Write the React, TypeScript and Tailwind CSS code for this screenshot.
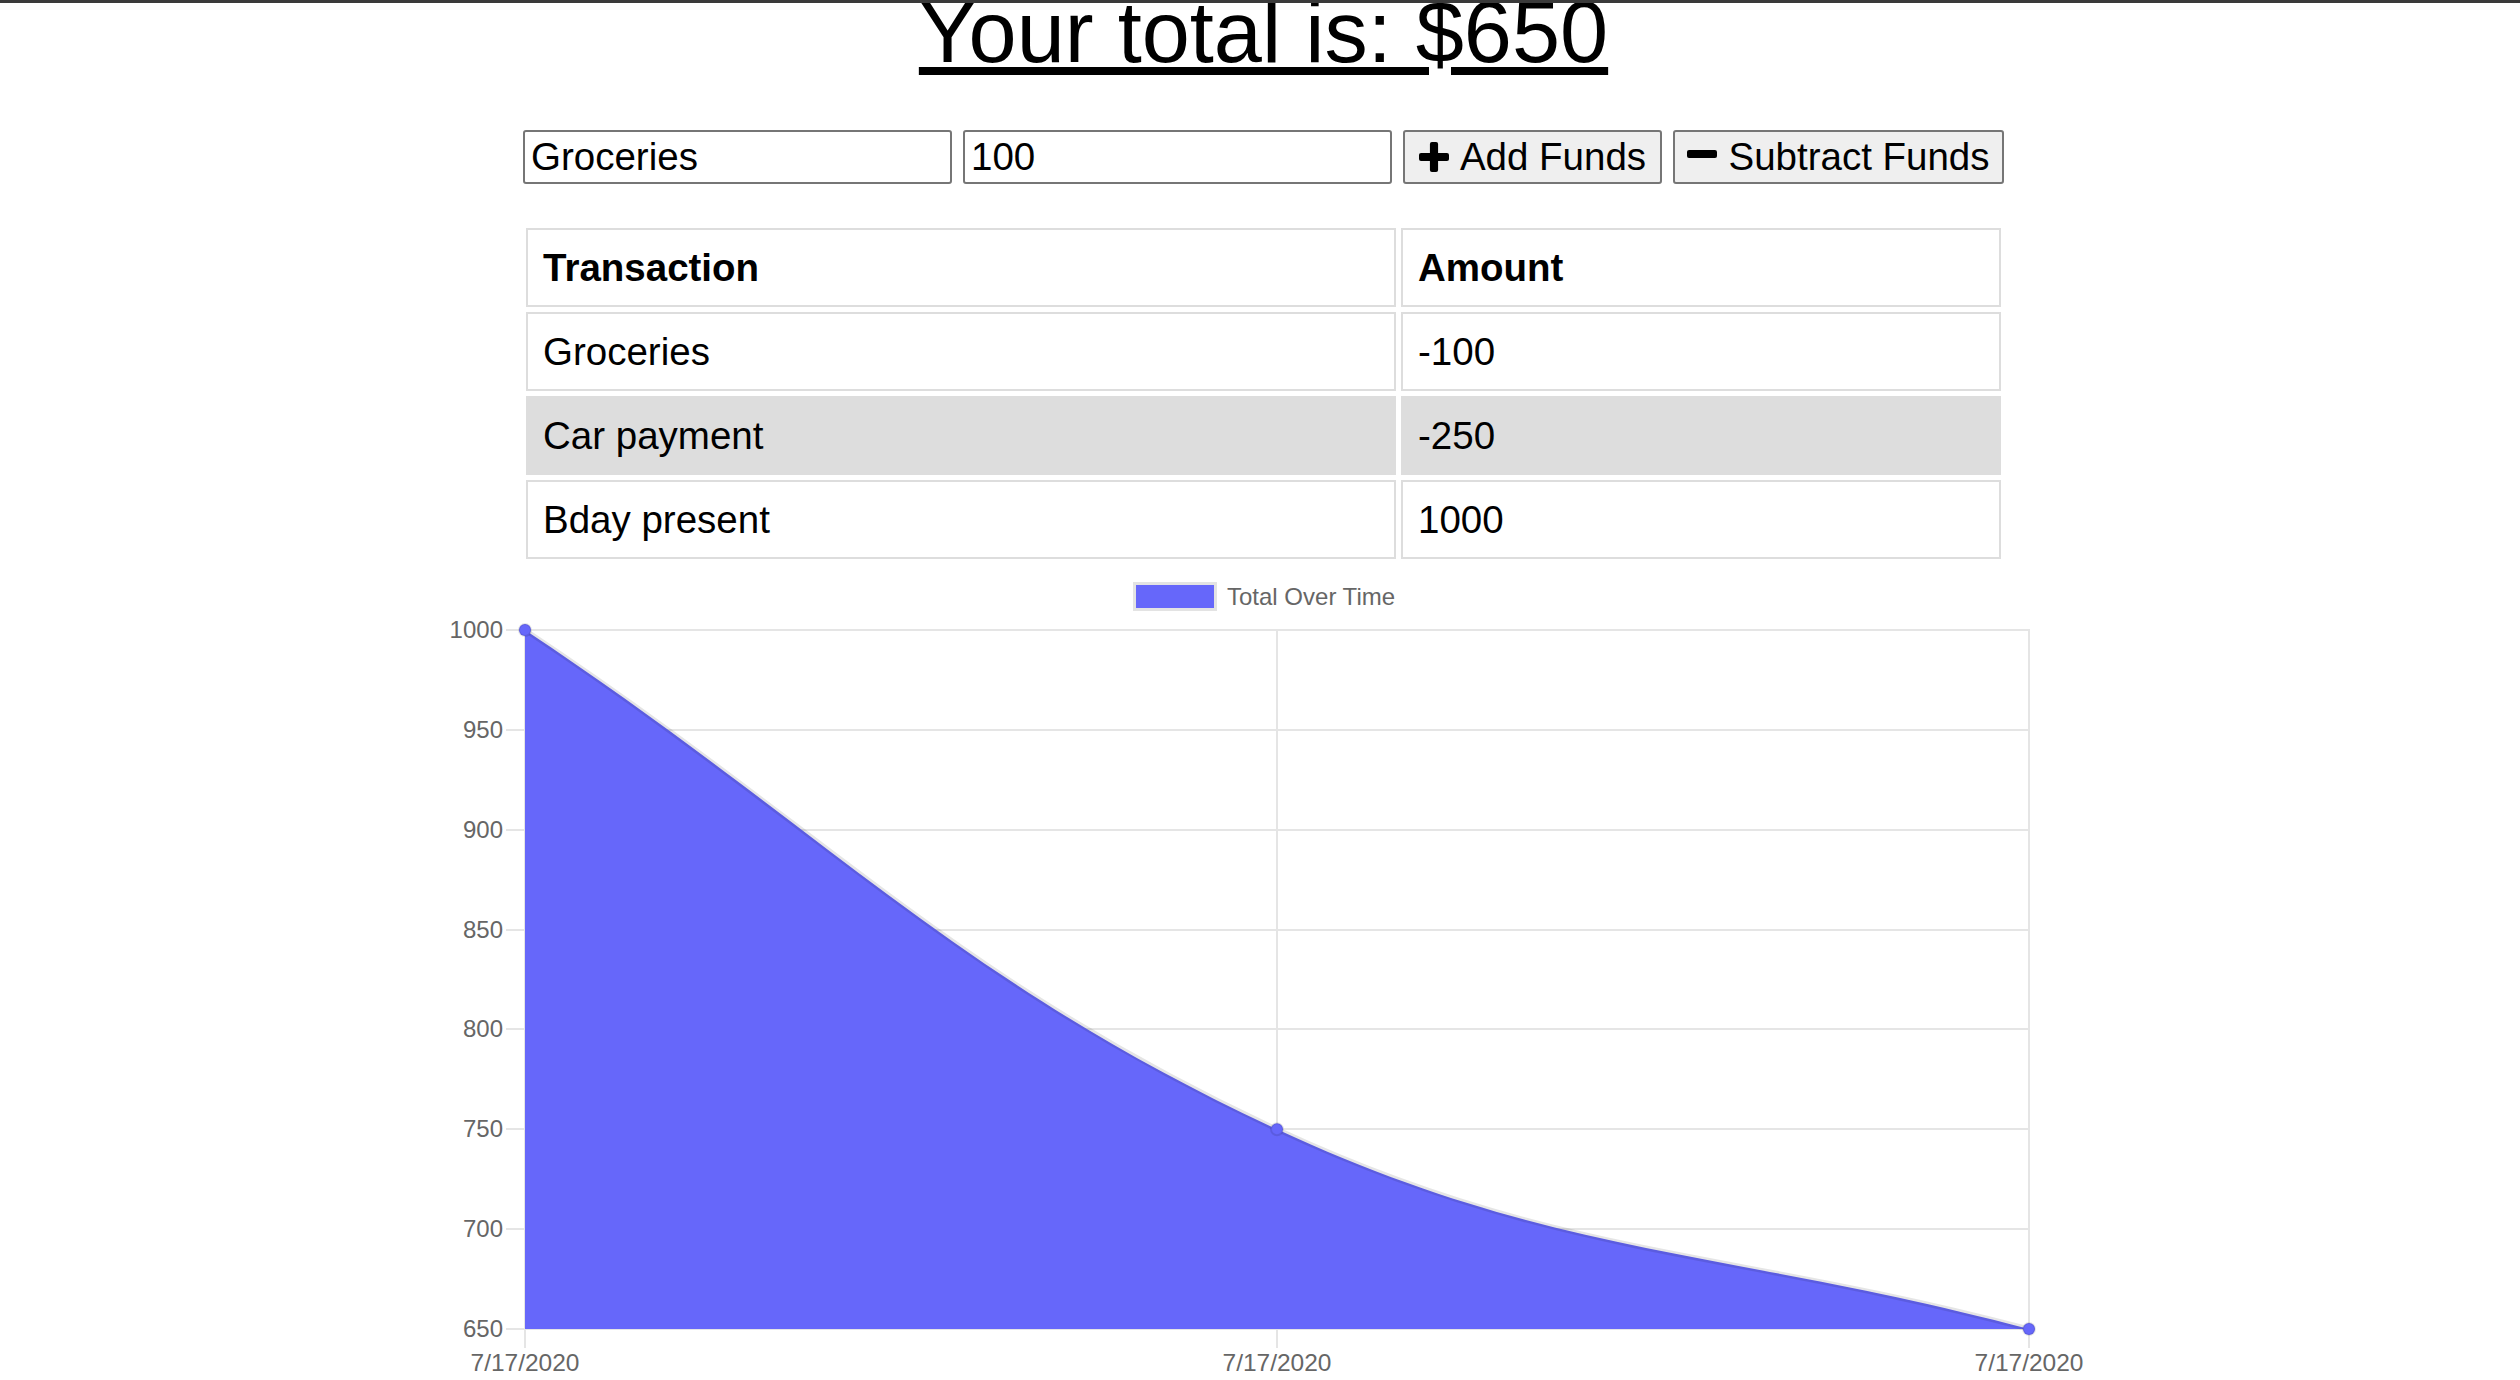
import React from "react";

const yTicks = [1000, 950, 900, 850, 800, 750, 700, 650];
const OFF = 2;
const yPos = (v: number) => Math.round(64 + OFF + ((1000 - v) / 50) * 99.857);
const xPos = [112, 864, 1616];

function PlusIcon() {
  return (
    <svg width="30" height="30" viewBox="0 0 100 100" className="shrink-0">
      <rect x="0" y="36.4" width="100" height="27.2" rx="6.8" fill="#000" />
      <rect x="36.4" y="0" width="27.2" height="100" rx="6.8" fill="#000" />
    </svg>
  );
}

function MinusIcon() {
  return (
    <svg width="30" height="30" viewBox="0 0 100 100" className="shrink-0 -translate-y-[3px]">
      <rect x="0" y="36.4" width="100" height="27.2" rx="6.8" fill="#000" />
    </svg>
  );
}

function Chart() {
  const P0 = [112, 64 + OFF];
  const P1 = [864, 563.3 + OFF];
  const P2 = [1616, 763 + OFF];
  const curve = `M${P0[0]},${P0[1]} C412.8,${263.7 + OFF} 540.9,${413.1 + OFF} ${P1[0]},${P1[1]} C1142.5,${692.7 + OFF} 1315.2,${683.1 + OFF} ${P2[0]},${P2[1]}`;
  const fill = `${curve} L1616,${763 + OFF} L112,${763 + OFF} Z`;
  const f = "Liberation Sans, Arial, sans-serif";
  return (
    <svg width="1701" height="816" className="block shrink-0">
      {/* legend */}
      <rect x="721.5" y="19.5" width="81" height="26" fill="#6667fa" stroke="#e3e3e3" strokeWidth="3" />
      <text x="814" y="40.5" fontFamily={f} fontSize="24" fill="#666">
        Total Over Time
      </text>
      {/* horizontal grid */}
      {yTicks.map((v) => (
        <line key={v} x1="93" x2="1617" y1={yPos(v)} y2={yPos(v)} stroke="#e5e5e5" strokeWidth="2" />
      ))}
      {/* vertical grid */}
      {xPos.map((x) => (
        <line key={x} x1={x} x2={x} y1={65} y2={784} stroke="#e5e5e5" strokeWidth="2" />
      ))}
      {/* fill + line */}
      <path d={fill} fill="#6667fa" />
      <path d={curve} fill="none" stroke="rgba(0,0,0,0.1)" strokeWidth="5" />
      {[P0, P1, P2].map((p, i) => (
        <circle key={i} cx={p[0]} cy={p[1]} r="6" fill="#6667fa" stroke="rgba(0,0,0,0.1)" strokeWidth="2" />
      ))}
      {/* y labels */}
      {yTicks.map((v) => (
        <text key={v} x="90" y={yPos(v) + 8} textAnchor="end" fontFamily={f} fontSize="24" fill="#666">
          {v}
        </text>
      ))}
      {/* x labels */}
      {xPos.map((x) => (
        <text key={x} x={x} y="807" textAnchor="middle" fontFamily={f} fontSize="24.5" fill="#666">
          7/17/2020
        </text>
      ))}
    </svg>
  );
}

const rows = [
  { name: "Groceries", amount: "-100", gray: false },
  { name: "Car payment", amount: "-250", gray: true },
  { name: "Bday present", amount: "1000", gray: false },
];

export default function App() {
  return (
    <div className="h-[1380px] overflow-hidden bg-white text-black font-['Liberation_Sans',Arial,sans-serif]">
      <div className="relative z-10 h-[3px] bg-[#3a3a3a]" />
      <div className="flex flex-col items-center pl-[7px]">
        <h1 className="-mt-[20px] text-[86.5px] leading-[98px] font-normal underline whitespace-nowrap">
          Your total is: $650
        </h1>

        <div className="mt-[49px] flex h-[54px] gap-[11px]">
          <input
            type="text"
            defaultValue="Groceries"
            className="h-[54px] w-[429px] rounded-[3px] border-2 border-[#767676] bg-white px-[6px] text-[38.5px] text-black outline-none"
          />
          <input
            type="text"
            defaultValue="100"
            className="h-[54px] w-[429px] rounded-[3px] border-2 border-[#767676] bg-white px-[6px] text-[38.5px] text-black outline-none"
          />
          <button className="flex h-[54px] w-[259px] items-center justify-center gap-[11px] rounded-[3px] border-2 border-[#767676] bg-[#efefef] text-[38.5px] text-black">
            <PlusIcon />
            <span>Add Funds</span>
          </button>
          <button className="flex h-[54px] w-[331px] items-center justify-center gap-[11px] rounded-[3px] border-2 border-[#767676] bg-[#efefef] text-[38.5px] text-black">
            <MinusIcon />
            <span>Subtract Funds</span>
          </button>
        </div>

        <table className="mt-[39px] w-[1485px] border-separate border-spacing-[5px] text-[38.5px] leading-[43px]">
          <thead>
            <tr>
              <th className="w-[870px] border-2 border-[#dddddd] px-[15px] py-[16px] text-left font-bold">Transaction</th>
              <th className="border-2 border-[#dddddd] px-[15px] py-[16px] text-left font-bold">Amount</th>
            </tr>
          </thead>
          <tbody>
            {rows.map((r) => (
              <tr key={r.name}>
                <td className={`border-2 border-[#dddddd] px-[15px] py-[16px] ${r.gray ? "bg-[#dddddd]" : "bg-white"}`}>{r.name}</td>
                <td className={`border-2 border-[#dddddd] px-[15px] py-[16px] ${r.gray ? "bg-[#dddddd]" : "bg-white"}`}>{r.amount}</td>
              </tr>
            ))}
          </tbody>
        </table>

        <Chart />
      </div>
    </div>
  );
}
